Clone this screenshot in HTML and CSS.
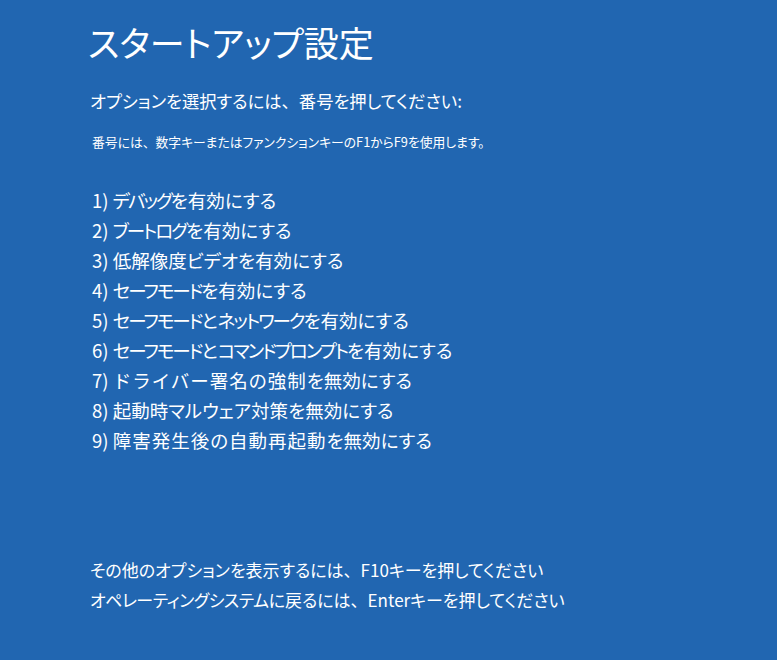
FILE: index.html
```html
<!DOCTYPE html>
<html lang="ja">
<head>
<meta charset="utf-8">
<title>スタートアップ設定</title>
<link rel="stylesheet" href="styles.css">
</head>
<body>
<main class="screen">
  <h1 class="title">スタートアップ設定</h1>
  <p class="prompt">オプションを選択するには<span class="fw">、</span>番号を押してください:</p>
  <p class="hint">番号には<span class="fw">、</span>数字キーまたはファンクションキーのF1からF9を使用します。</p>
  <ol class="options">
    <li>1) <span class="kn">デバッグ</span>を有効にする</li>
    <li>2) <span class="kn">ブートログ</span>を有効にする</li>
    <li>3) 低解像度ビデオを有効にする</li>
    <li>4) <span class="kn">セーフモード</span>を有効にする</li>
    <li>5) <span class="kn">セーフモード</span>と<span class="kn">ネットワーク</span>を有効にする</li>
    <li>6) <span class="kn">セーフモード</span>と<span class="kn">コマンドプロンプト</span>を有効にする</li>
    <li>7) <span class="wd"><span class="fw">ドライバー</span>署名の強制</span>を無効にする</li>
    <li>8) 起動時マルウェア対策を無効にする</li>
    <li>9) <span class="wd">障害発生後の自動再起動</span>を無効にする</li>
  </ol>
  <div class="footer">
    <p>その他のオプションを表示するには<span class="fw">、</span>F10キーを押してください</p>
    <p><span class="sn">オペレーティングシステム</span>に戻るには<span class="fw">、</span>Enterキーを押してください</p>
  </div>
</main>
</body>
</html>
```
FILE: styles.css
```css
html, body {
  margin: 0;
  padding: 0;
  height: 100%;
  background: #2166b1;
}
body {
  font-family: "Noto Sans CJK JP", "Noto Sans", sans-serif;
  font-feature-settings: "palt" 1;
  color: #ffffff;
}
.fw {
  font-feature-settings: normal;
}
.kn {
  letter-spacing: -2px;
}
.sn {
  letter-spacing: -0.5px;
}
.wd {
  letter-spacing: 1px;
}
.screen {
  padding: 20px 0 0 88px;
}
.title {
  margin: 0;
  font-size: 35px;
  font-weight: 400;
  line-height: 44px;
}
.prompt {
  margin: 25px 0 0 2px;
  font-size: 17.3px;
  line-height: 24px;
}
.hint {
  margin: 20px 0 0 4px;
  font-size: 12.8px;
  line-height: 18px;
}
.options {
  list-style: none;
  margin: 34px 0 0 4px;
  padding: 0;
  font-size: 18.5px;
  line-height: 30px;
}
.footer {
  margin: 100px 0 0 2px;
  font-size: 17px;
  line-height: 30px;
}
.footer p {
  margin: 0;
}
```
